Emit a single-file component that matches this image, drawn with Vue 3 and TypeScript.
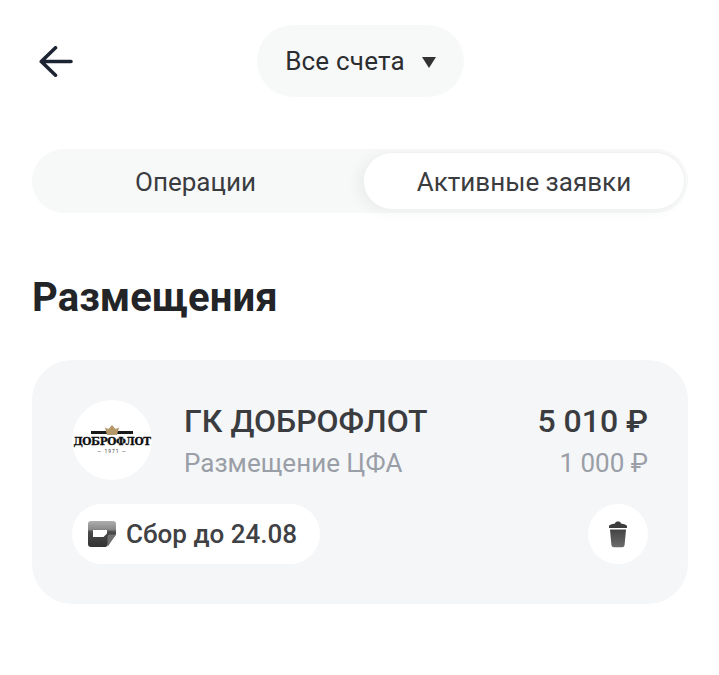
<script setup lang="ts">
const tabs = [
  { label: 'Операции', active: false },
  { label: 'Активные заявки', active: true },
]
</script>

<template>
  <div class="page">
    <header class="top">
      <button class="back" aria-label="Назад">
        <svg width="34" height="32" viewBox="0 0 34 32" fill="none">
          <path d="M32 15.500H3M16.500 1.800L2.300 15.500L16.500 29.200" stroke="#1c2433" stroke-width="3.600" stroke-linecap="round" stroke-linejoin="round" />
        </svg>
      </button>
      <div class="account">
        <span>Все счета</span>
        <i class="caret" />
      </div>
    </header>

    <nav class="tabs">
      <div v-for="tab in tabs" :key="tab.label" class="tab" :class="{ active: tab.active }">
        {{ tab.label }}
      </div>
    </nav>

    <h1 class="title">Размещения</h1>

    <section class="card">
      <div class="row">
        <div class="logo">
          <svg class="crown" width="42" height="10" viewBox="0 0 42 10">
            <rect x="0" y="6" width="42" height="3" fill="#1a1a1a" />
            <path d="M14 2.500l3.500 1.500L21 0l3.500 4L28 2.500 26 10H16z" fill="#b4986a" />
          </svg>
          <span class="logo-name">ДОБРОФЛОТ</span>
          <span class="logo-year">— 1971 —</span>
        </div>
        <div class="info">
          <div class="name">ГК ДОБРОФЛОТ</div>
          <div class="sub">Размещение ЦФА</div>
        </div>
        <div class="sums">
          <div class="sum">5 010 ₽</div>
          <div class="sum-sub">1 000 ₽</div>
        </div>
      </div>
      <div class="row bottom">
        <div class="deadline">
          <svg width="28" height="26" viewBox="0 0 28 26">
            <defs>
              <linearGradient id="note" x1="0" y1="0" x2="0" y2="1">
                <stop offset="0" stop-color="#adadad" />
                <stop offset="0.32" stop-color="#8a8a8a" />
                <stop offset="0.42" stop-color="#4a4a4a" />
                <stop offset="1" stop-color="#333" />
              </linearGradient>
            </defs>
            <path fill-rule="evenodd" d="M3 0H25a3 3 0 0 1 3 3V13.500L18 26H3a3 3 0 0 1-3-3V3a3 3 0 0 1 3-3ZM5 9v7H15.500L19 12.500V9Z" fill="url(#note)" />
            <path d="M28 13.500H22a2.500 2.500 0 0 0-2.500 2.500V26Z" fill="#707070" />
          </svg>
          <span>Сбор до 24.08</span>
        </div>
        <button class="trash" aria-label="Удалить">
          <svg width="20" height="27" viewBox="0 0 20 27">
            <defs>
              <linearGradient id="bin" x1="0" y1="0" x2="0" y2="1">
                <stop offset="0" stop-color="#444" />
                <stop offset="1" stop-color="#6c6c6c" />
              </linearGradient>
            </defs>
            <path d="M1 5.500C1 4 4 3 7 2.600 7.300 1 8.500.5 10 .5s2.700.5 3 2.100C16 3 19 4 19 5.500V7H1Z" fill="#3c3c3c" />
            <path d="M2 8.500H18L16.600 24a2.500 2.500 0 0 1-2.500 2.300H5.900A2.500 2.500 0 0 1 3.400 24Z" fill="url(#bin)" />
          </svg>
        </button>
      </div>
    </section>
  </div>
</template>

<style>
html,
body {
  margin: 0;
  background: #fff;
}
</style>

<style scoped>
.page {
  width: 719px;
  height: 675px;
  box-sizing: border-box;
  padding: 25px 31px 0 32px;
  font-family: Roboto, 'Liberation Sans', sans-serif;
  color: #2b2d30;
  overflow: hidden;
}

.top {
  position: relative;
  display: flex;
  justify-content: center;
  height: 72px;
}

.back {
  position: absolute;
  left: 7px;
  top: 21px;
  padding: 0;
  border: 0;
  background: none;
  display: flex;
}

.account {
  width: 207px;
  margin-left: 1px;
  box-sizing: border-box;
  display: flex;
  align-items: center;
  justify-content: center;
  gap: 17px;
  border-radius: 36px;
  background: #f7f9f8;
  font-size: 26px;
  letter-spacing: 0.2px;
}

.caret {
  width: 0;
  height: 0;
  border-left: 7.500px solid transparent;
  border-right: 7.500px solid transparent;
  border-top: 11px solid #333;
  margin-top: 2px;
}

.tabs {
  margin-top: 52px;
  height: 64px;
  box-sizing: border-box;
  padding: 4px;
  display: grid;
  grid-template-columns: 328px 320px;
  border-radius: 32px;
  background: #f7f9f8;
}

.tab {
  display: flex;
  align-items: center;
  justify-content: center;
  padding-top: 2px;
  border-radius: 28px;
  font-size: 26px;
  color: #3a3c3f;
}

.tab:first-child {
  padding-right: 9px;
}

.tab.active {
  background: #fff;
  box-shadow: 0 0 0 1px #f0f1f1, -6px 2px 14px rgba(0, 0, 0, 0.05);
}

.title {
  margin: 60px 0 0;
  font-size: 40px;
  line-height: 49px;
  font-weight: 700;
  letter-spacing: 0.1px;
  color: #232427;
}

.card {
  margin-top: 38px;
  height: 244px;
  box-sizing: border-box;
  padding: 40px;
  border-radius: 40px;
  background: #f4f6f8;
  display: flex;
  flex-direction: column;
  justify-content: space-between;
}

.row {
  display: flex;
  align-items: flex-start;
}

.row.bottom {
  align-items: center;
  justify-content: space-between;
}

.logo {
  width: 80px;
  height: 80px;
  flex: none;
  border-radius: 50%;
  background: #fff;
  display: flex;
  flex-direction: column;
  align-items: center;
  justify-content: center;
  overflow: hidden;
}

.logo-name {
  font-family: 'DejaVu Serif', 'Liberation Serif', serif;
  font-weight: 700;
  font-size: 10.500px;
  line-height: 12px;
  letter-spacing: -0.4px;
  -webkit-text-stroke: 0.3px #111;
  color: #111;
}

.logo-year {
  font-size: 5px;
  line-height: 8px;
  letter-spacing: 1px;
  color: #444;
}

.info {
  margin-left: 33px;
  flex: 1;
}

.name {
  margin-left: -1px;
  font-size: 32px;
  line-height: 42px;
  font-weight: 500;
  color: #3a3c3f;
}

.sub {
  margin-top: 1px;
  margin-left: -1px;
  font-size: 26px;
  line-height: 40px;
  color: #9a9ea6;
}

.sums {
  text-align: right;
}

.sum {
  font-size: 32px;
  line-height: 42px;
  font-weight: 500;
  color: #3a3c3f;
}

.sum-sub {
  margin-top: 1px;
  font-size: 26px;
  line-height: 40px;
  color: #9a9ea6;
}

.deadline {
  height: 60px;
  box-sizing: border-box;
  padding: 0 23px 0 16px;
  display: flex;
  align-items: center;
  gap: 10px;
  border-radius: 30px;
  background: #fff;
  font-size: 26px;
  font-weight: 500;
  color: #3f4144;
}

.trash {
  width: 60px;
  height: 60px;
  padding: 0;
  border: 0;
  border-radius: 50%;
  background: #fff;
  display: flex;
  align-items: center;
  justify-content: center;
}
</style>
